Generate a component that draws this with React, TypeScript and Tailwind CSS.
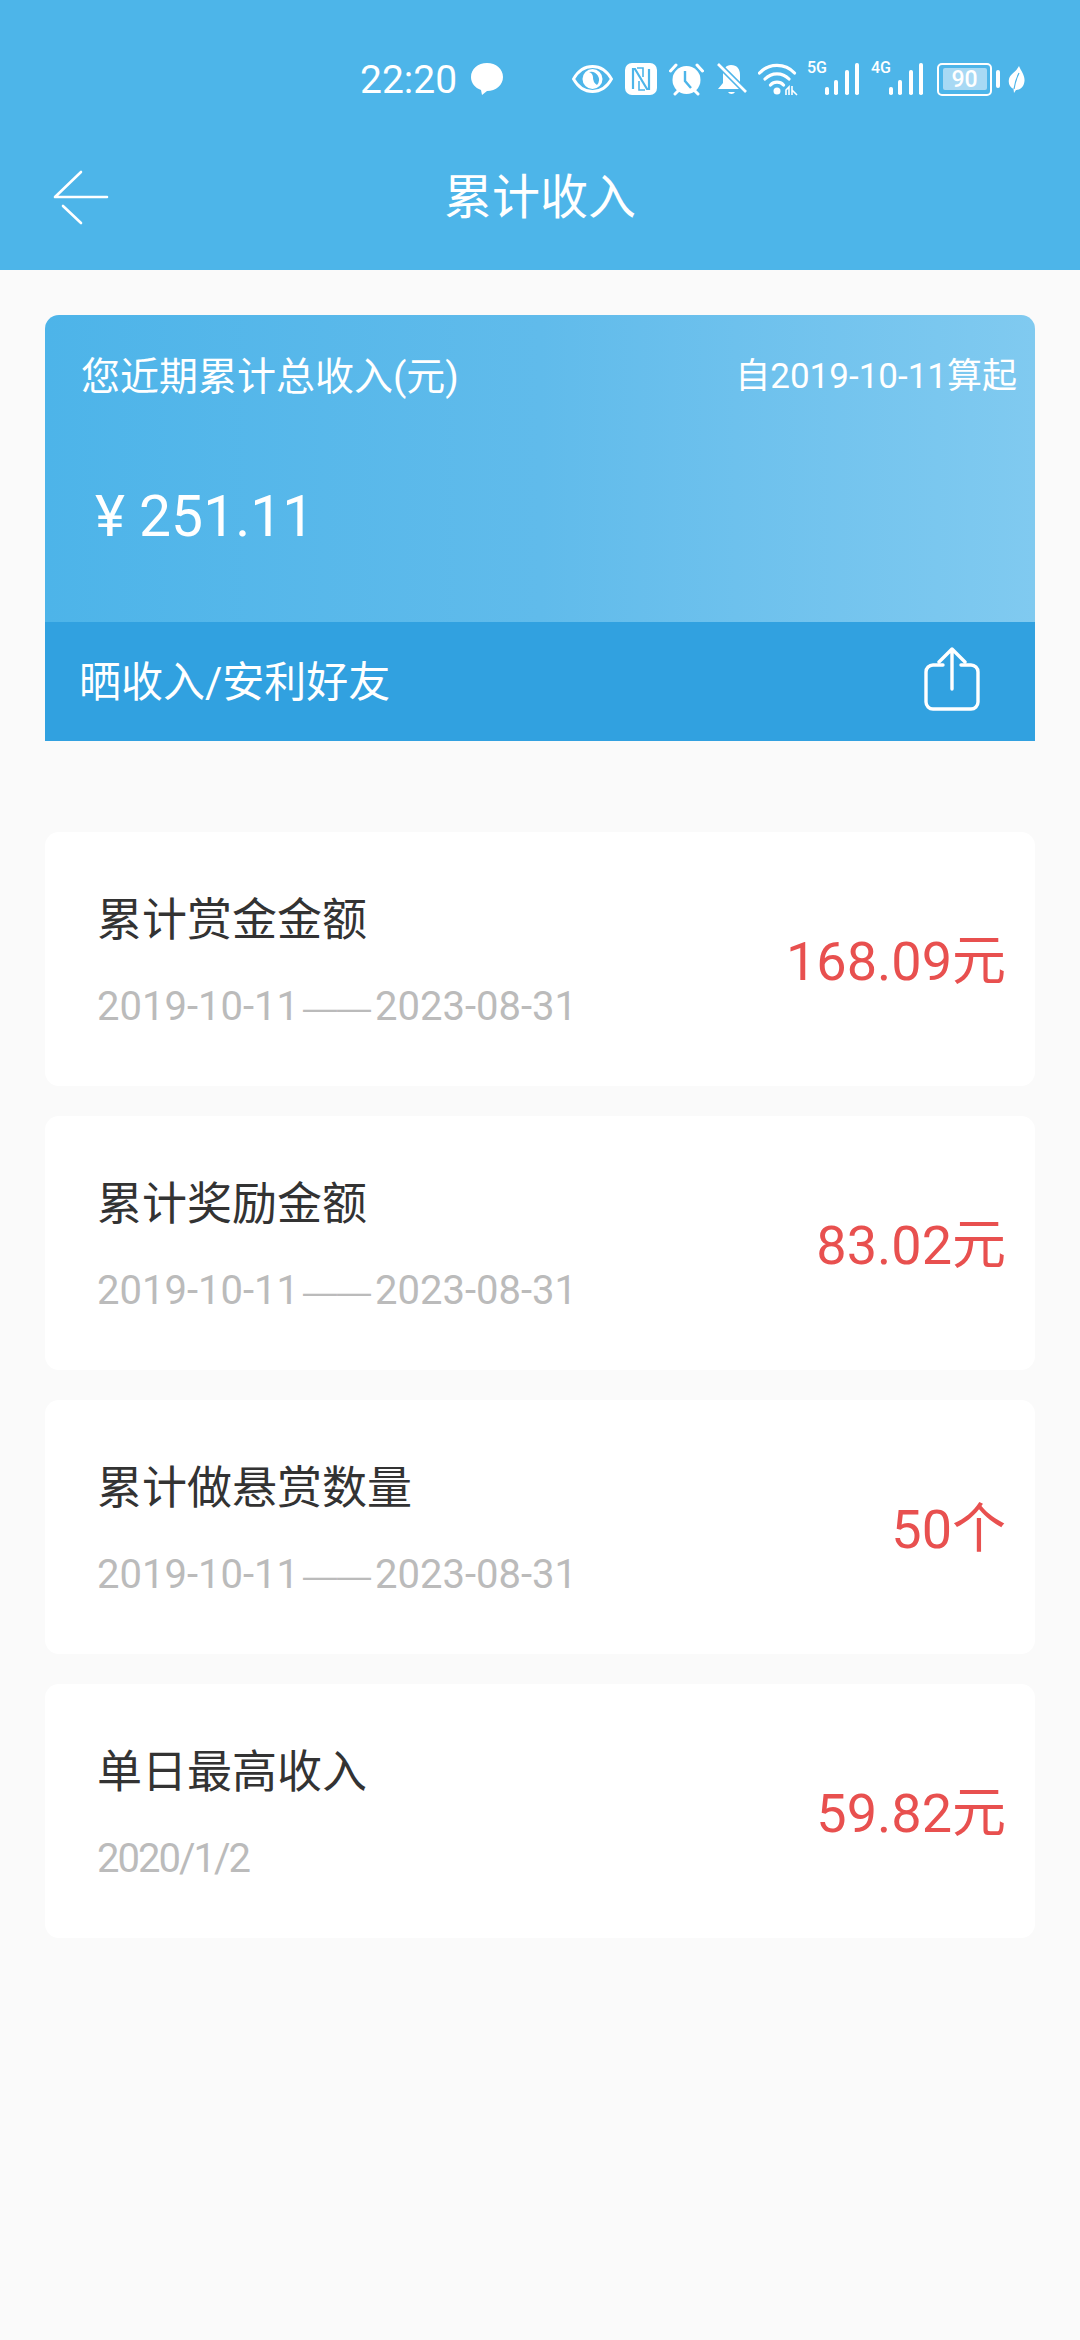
import React from "react";

const FONT = '"Noto Sans CJK SC", Roboto, sans-serif';
const ff = "font-['Roboto','Noto_Sans_CJK_SC',sans-serif]";

function Eye() {
  return (
    <svg width="41" height="28" viewBox="0 0 41 28" className="shrink-0">
      <path d="M1.500 14C6 6 13 1.500 20.500 1.500S35 6 39.500 14C35 22 28 26.500 20.500 26.500S6 22 1.500 14Z" fill="none" stroke="white" strokeWidth="2.800" />
      <circle cx="20.500" cy="14" r="10" fill="white" />
      <path d="M17 7a8 8 0 0 1 8 13a9 9 0 0 1-4-8a6 6 0 0 0-4-5Z" fill="#4db5e9" />
    </svg>
  );
}
function Nfc() {
  return (
    <svg width="32" height="32" viewBox="0 0 32 32" className="shrink-0">
      <rect x="0" y="0" width="32" height="32" rx="7" fill="white" />
      <path d="M8 26V6h2l12 20h2V6" fill="none" stroke="#4db5e9" strokeWidth="2.200" />
      <path d="M12 5h6v9M20 27h-6v-9" fill="none" stroke="#4db5e9" strokeWidth="1.600" />
    </svg>
  );
}
function Alarm() {
  return (
    <svg width="35" height="34" viewBox="0 0 35 34" className="shrink-0">
      <circle cx="17.500" cy="18" r="14" fill="white" />
      <path d="M1.500 9 7 3M33.500 9 28 3M6 32l3-3M29 32l-3-3" stroke="white" strokeWidth="3" strokeLinecap="round" />
      <path d="M16 9v10l6 7" fill="none" stroke="#4db5e9" strokeWidth="2.400" />
    </svg>
  );
}
function Bell() {
  return (
    <svg width="32" height="34" viewBox="0 0 32 34" className="shrink-0">
      <path d="M15 3c6 0 9 4 9 10v8l5 6H2l5-6v-9c0-5 3-9 8-9Z" fill="white" />
      <path d="M12 30a4 4 0 0 0 7 0Z" fill="white" />
      <path d="M3 3l27 27" stroke="#4db5e9" strokeWidth="6" />
      <path d="M2 2l28 28" stroke="white" strokeWidth="2.600" />
    </svg>
  );
}
function Wifi() {
  return (
    <svg width="40" height="34" viewBox="0 0 40 34" className="shrink-0">
      <path d="M1.500 11a24 24 0 0 1 35 0M7 17a16.500 16.500 0 0 1 24 0M12.500 23a9 9 0 0 1 13 0" fill="none" stroke="white" strokeWidth="3.200" strokeLinecap="round" />
      <circle cx="19" cy="29" r="3.500" fill="white" />
      <path d="M28 33v-5l3-3v8M34 33v-9M34 28l5 5" fill="none" stroke="white" strokeWidth="1.600" />
    </svg>
  );
}
function Signal({ label }: { label: string }) {
  const bars = [
    [18, 8],
    [27, 15],
    [38, 25],
    [48, 32],
  ];
  return (
    <div className="relative w-[53px] h-[34px] shrink-0">
      <span className={`absolute left-0 top-[-2px] text-[16px] leading-[16px] font-medium text-white ${ff}`}>{label}</span>
      <svg width="53" height="34" viewBox="0 0 53 34" className="block">
        {bars.map(([x, h]) => (
          <rect key={x} x={x} y={33 - h} width="4" height={h} rx="1.800" fill="white" />
        ))}
      </svg>
    </div>
  );
}
function Battery() {
  return (
    <div className="flex items-center gap-[4px] shrink-0">
      <div className="w-[55px] h-[33px] rounded-[5px] border-[2.500px] border-white flex items-center justify-center">
        <div className={`w-[44px] h-[22px] rounded-[2px] bg-[#a8d9f4] flex items-center justify-center text-white text-[23px] leading-none font-medium ${ff}`}>90</div>
      </div>
      <div className="w-[4px] h-[18px] rounded-[2px] bg-white" />
    </div>
  );
}
function Leaf() {
  return (
    <svg width="17" height="28" viewBox="0 0 17 28" className="shrink-0">
      <path d="M11 1C13 6 17 10 16.500 16C16 22 12 25 8 25L6 28L5.500 24C2 22 0 19 1 14C2 9 8 7 11 1Z" fill="white" />
      <path d="M6 24C7 17 9 12 11 8" stroke="#4db5e9" strokeWidth="1.200" fill="none" />
    </svg>
  );
}

function BackArrow() {
  return (
    <svg width="56" height="56" viewBox="0 0 56 56" fill="none" stroke="white" strokeWidth="2.600" strokeLinecap="round" strokeLinejoin="round">
      <path d="M28 2 2 27H54" />
      <path d="M10 36 28 53" />
    </svg>
  );
}
function Share() {
  return (
    <svg width="56" height="64" viewBox="0 0 56 64" fill="none" stroke="white" strokeWidth="3.400" strokeLinecap="round" strokeLinejoin="round">
      <path d="M19 18H9a7 7 0 0 0-7 7v30a7 7 0 0 0 7 7h38a7 7 0 0 0 7-7V25a7 7 0 0 0-7-7H37" />
      <path d="M28 42V2M15 15 28 2l13 13" />
    </svg>
  );
}

const rows = [
  { t: "累计赏金金额", a: "2019-10-11", b: "2023-08-31", v: "168.09元" },
  { t: "累计奖励金额", a: "2019-10-11", b: "2023-08-31", v: "83.02元" },
  { t: "累计做悬赏数量", a: "2019-10-11", b: "2023-08-31", v: "50个" },
  { t: "单日最高收入", a: "2020/1/2", b: "", v: "59.82元" },
];

export default function App() {
  return (
    <div className={`w-[1080px] h-[2340px] bg-[#fafafa] overflow-hidden ${ff}`} style={{ fontFamily: `Roboto, ${FONT}` }}>
      <header className="h-[270px] bg-[#4db5e9] flex flex-col">
        <div className="h-[161px] pt-[60px] pl-[360px] flex items-start">
          <span className="w-[98px] text-white text-[39px] leading-[40px] font-normal">22:20</span>
          <svg width="34" height="34" viewBox="0 0 34 34" className="ml-[12px] mr-[68px] shrink-0 mt-[2px]">
            <path d="M17 1C26 1 33 7 33 15S26 29 17 29L12 33L11 28C5 26 1 21 1 15C1 7 8 1 17 1Z" fill="white" />
          </svg>
          <div className="flex items-center h-[34px] mt-[2px]">
            <Eye />
            <div className="ml-[12px]"><Nfc /></div>
            <div className="ml-[12px]"><Alarm /></div>
            <div className="ml-[12px]"><Bell /></div>
            <div className="ml-[10px]"><Wifi /></div>
            <div className="ml-[9px]"><Signal label="5G" /></div>
            <div className="ml-[11px]"><Signal label="4G" /></div>
            <div className="ml-[13px]"><Battery /></div>
            <div className="ml-[8px]"><Leaf /></div>
          </div>
        </div>
        <div className="relative flex justify-center">
          <div className="absolute left-[53px] top-[9px]">
            <BackArrow />
          </div>
          <h1 className="text-white text-[48px] leading-[60px] font-normal mt-[7px]">累计收入</h1>
        </div>
      </header>

      <main className="px-[45px] pt-[45px]">
        <section className="rounded-t-[14px] overflow-hidden">
          <div className="h-[307px] bg-gradient-to-r from-[#4db4e9] via-[#60bbeb] to-[#80caf0] text-white">
            <div className="flex justify-between items-start pl-[36px] pr-[18px] pt-[38px]">
              <span className="text-[39px] leading-[48px]">您近期累计总收入(元)</span>
              <span className="text-[35px] leading-[44px] mt-[2px]">自2019-10-11算起</span>
            </div>
            <div className="pl-[50px] mt-[80px] text-[57px] leading-[72px]">¥ 251.11</div>
          </div>
          <div className="h-[119px] bg-[#31a1e0] flex items-center justify-between pl-[34px] pr-[55px]">
            <span className="text-white text-[42px] leading-[56px] mt-[2px]">晒收入/安利好友</span>
            <div className="mb-[5px]"><Share /></div>
          </div>
        </section>

        <div className="mt-[91px] flex flex-col gap-[30px]">
          {rows.map((r) => (
            <div key={r.t} className="h-[254px] bg-white rounded-[14px] flex items-center justify-between pl-[52px] pr-[29px]">
              <div className="mt-[6px]">
                <div className="text-[#333333] text-[45px] leading-[56px]">{r.t}</div>
                <div className={`text-[#bbbbbb] text-[40px] leading-[48px] mt-[34px] flex items-center ${r.b ? "" : "tracking-[-2px]"}`}>
                  <span>{r.a}</span>
                  {r.b && <span className="font-['Liberation_Sans'] text-[34px] mx-[4px]">——</span>}
                  {r.b && <span>{r.b}</span>}
                </div>
              </div>
              <div className="text-[#e8504f] text-[54px] leading-[64px] mt-[6px]">{r.v}</div>
            </div>
          ))}
        </div>
      </main>
    </div>
  );
}
